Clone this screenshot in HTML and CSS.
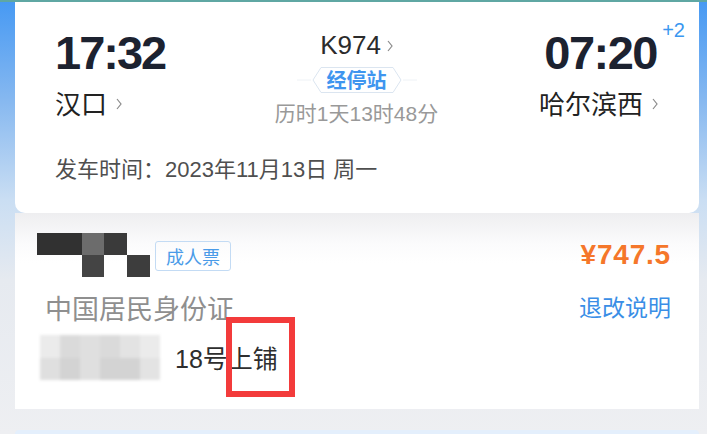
FILE: index.html
```html
<!DOCTYPE html>
<html lang="zh">
<head>
<meta charset="utf-8">
<title>K974</title>
<link rel="stylesheet" href="styles.css">
</head>
<body>
<div class="page">
  <div class="topline"></div>
  <section class="card trip">
    <div class="trip-row">
      <div class="end dep">
        <div class="time">17:32</div>
        <div class="station">汉口<svg class="chev" viewBox="0 0 6 12"><polyline points="1,1 5,6 1,11"/></svg></div>
      </div>
      <div class="mid">
        <div class="train">K974<svg class="chev small" viewBox="0 0 6 12"><polyline points="1,1 5,6 1,11"/></svg></div>
        <div class="stops">
          <svg class="hex" viewBox="0 0 120 26" preserveAspectRatio="none">
            <line x1="0" y1="13" x2="14" y2="13" class="glow"/>
            <line x1="106" y1="13" x2="120" y2="13" class="glow"/>
            <polygon points="24,0.5 96,0.5 104,13 96,25.5 24,25.5 16,13"/>
          </svg>
          <span class="stops-text">经停站</span>
        </div>
        <div class="dur">历时1天13时48分</div>
      </div>
      <div class="end arr">
        <div class="time">07:20<span class="plus">+2</span></div>
        <div class="station">哈尔滨西<svg class="chev" viewBox="0 0 6 12"><polyline points="1,1 5,6 1,11"/></svg></div>
      </div>
    </div>
    <div class="date">发车时间：2023年11月13日 周一</div>
  </section>

  <section class="card pax">
    <div class="pax-row top">
      <div class="mosaic">
        <i class="m1"></i><i class="m2"></i><i class="m3"></i><i class="m0"></i>
        <i class="m0"></i><i class="m4"></i><i class="m0"></i><i class="m5"></i>
      </div>
      <span class="tag">成人票</span>
      <span class="price">¥747.5</span>
    </div>
    <div class="pax-row mid-row">
      <span class="idtype">中国居民身份证</span>
      <span class="rules">退改说明</span>
    </div>
    <div class="pax-row seat-row">
      <div class="blur">
        <i class="b0"></i><i class="b2"></i><i class="b3"></i><i class="b2"></i><i class="b1"></i><i class="b0"></i>
        <i class="b3"></i><i class="b4"></i><i class="b3"></i><i class="b4"></i><i class="b4"></i><i class="b1"></i>
      </div>
      <span class="seat">18号上铺</span>
    </div>
    <div class="mark"></div>
  </section>

  <section class="card next"></section>
</div>
</body>
</html>
```

FILE: styles.css
```css
* { box-sizing: border-box; }
html, body { margin: 0; padding: 0; }
body {
  width: 707px;
  height: 434px;
  overflow: hidden;
  font-family: "Liberation Sans", "Noto Sans CJK SC", sans-serif;
  background: linear-gradient(180deg, #4699f3 0, #86b8f0 100px, #cadef3 200px, #e6eaf0 280px, #eeeff2 434px);
}
.page {
  display: flex;
  flex-direction: column;
  height: 434px;
  overflow: hidden;
}
.topline {
  height: 2px;
  background: #5fa7a3;
  flex: none;
}
.card {
  margin: 0 8px 0 15px;
  background: #fff;
  flex: none;
}
.trip {
  height: 211px;
  border-radius: 0 0 10px 10px;
  padding: 27px 41px 0 40px;
}
.trip-row {
  display: grid;
  grid-template-columns: 1fr auto 1fr;
}
.end { display: flex; flex-direction: column; }
.arr { align-items: flex-end; }
.time {
  position: relative;
  font-size: 47px;
  line-height: 47px;
  font-weight: 700;
  letter-spacing: -2px;
  color: #1c2230;
}
.arr .time { letter-spacing: -1.5px; margin-right: 1px; }
.plus {
  position: absolute;
  right: -28px;
  top: -9px;
  font-size: 20px;
  line-height: 20px;
  font-weight: 400;
  letter-spacing: 0;
  color: #3b97f0;
}
.station {
  margin-top: 12px;
  font-family: "Noto Sans CJK SC", sans-serif;
  font-size: 26px;
  line-height: 30px;
  color: #222;
  display: flex;
  align-items: center;
}
.chev {
  width: 6px;
  height: 12px;
  margin-left: 9px;
  margin-top: 2px;
  fill: none;
  stroke: #8a8a8a;
  stroke-width: 1.2;
}
.chev.small { margin-left: 6px; }
.mid {
  display: flex;
  flex-direction: column;
  align-items: center;
  padding-top: 1px;
}
.train {
  font-size: 26px;
  line-height: 30px;
  color: #2b2b2b;
  display: flex;
  align-items: center;
}
.stops {
  position: relative;
  margin-top: 7px;
  width: 120px;
  height: 26px;
  display: flex;
  align-items: center;
  justify-content: center;
}
.hex {
  position: absolute;
  inset: 0;
  width: 120px;
  height: 26px;
  fill: #fff;
  stroke: #dbe5f0;
  stroke-width: 1;
}
.hex .glow { stroke: #eef2f6; }
.stops-text {
  position: relative;
  font-family: "Noto Sans CJK SC", sans-serif;
  font-size: 20px;
  line-height: 24px;
  font-weight: 700;
  color: #3f95ef;
}
.dur {
  margin-top: 9px;
  font-size: 21px;
  line-height: 24px;
  color: #999;
  white-space: nowrap;
}
.date {
  margin-top: 32px;
  font-size: 22px;
  line-height: 24px;
  color: #4f4f4f;
}

.pax {
  position: relative;
  height: 196px;
  background: linear-gradient(180deg, #eeeef0 0, #fbfbfc 30px, #fff 50px);
  padding: 20px 28px 0 22px;
  display: flex;
  flex-direction: column;
}
.pax-row { display: flex; }
.top { align-items: flex-start; }
.mosaic {
  display: grid;
  grid-template-columns: 45px 22px 23px 23px;
  grid-template-rows: 22px 22px;
}
.mosaic i { display: block; }
.m0 { background: transparent; }
.m1 { background: #313131; }
.m2 { background: #6c6c6c; }
.m3 { background: #3a3a3a; }
.m4 { background: #444; }
.m5 { background: #3d3d3d; }
.tag {
  margin: 8px 0 0 5px;
  height: 30px;
  padding: 0 10px;
  border: 1px solid #c3dbf4;
  border-radius: 3px;
  font-family: "Noto Sans CJK SC", sans-serif;
  font-size: 18px;
  line-height: 28px;
  color: #4a9be8;
}
.price {
  margin-left: auto;
  margin-top: 7px;
  font-size: 28px;
  line-height: 30px;
  font-weight: 700;
  letter-spacing: 0.8px;
  color: #f5772a;
}
.mid-row {
  margin-top: 16px;
  align-items: flex-start;
  padding-left: 8px;
}
.idtype {
  font-family: "Noto Sans CJK SC", sans-serif;
  font-size: 27px;
  line-height: 30px;
  color: #8f8f8f;
}
.rules {
  margin-left: auto;
  margin-top: -2px;
  font-family: "Noto Sans CJK SC", sans-serif;
  font-size: 23px;
  line-height: 30px;
  color: #3a8ee6;
}
.seat-row {
  margin-top: 12px;
  padding-left: 3px;
  align-items: center;
}
.blur {
  width: 120px;
  height: 45px;
  display: grid;
  grid-template-columns: repeat(6, 1fr);
  grid-template-rows: 1fr 1fr;
  filter: blur(1.5px);
}
.blur i { display: block; }
.b0 { background: #ebebeb; }
.b1 { background: #e3e3e3; }
.b2 { background: #dadada; }
.b3 { background: #dfdfdf; }
.b4 { background: #d3d3d3; }
.seat {
  margin-left: 15px;
  margin-top: 2px;
  font-size: 25px;
  line-height: 30px;
  color: #2e2e2e;
}
.mark {
  position: absolute;
  left: 211px;
  top: 104px;
  width: 69px;
  height: 80px;
  border: 6px solid #f33b3b;
}
.next {
  margin-top: 21px;
  height: 4px;
  border-radius: 8px 8px 0 0;
  background: #e4effc;
}
```
